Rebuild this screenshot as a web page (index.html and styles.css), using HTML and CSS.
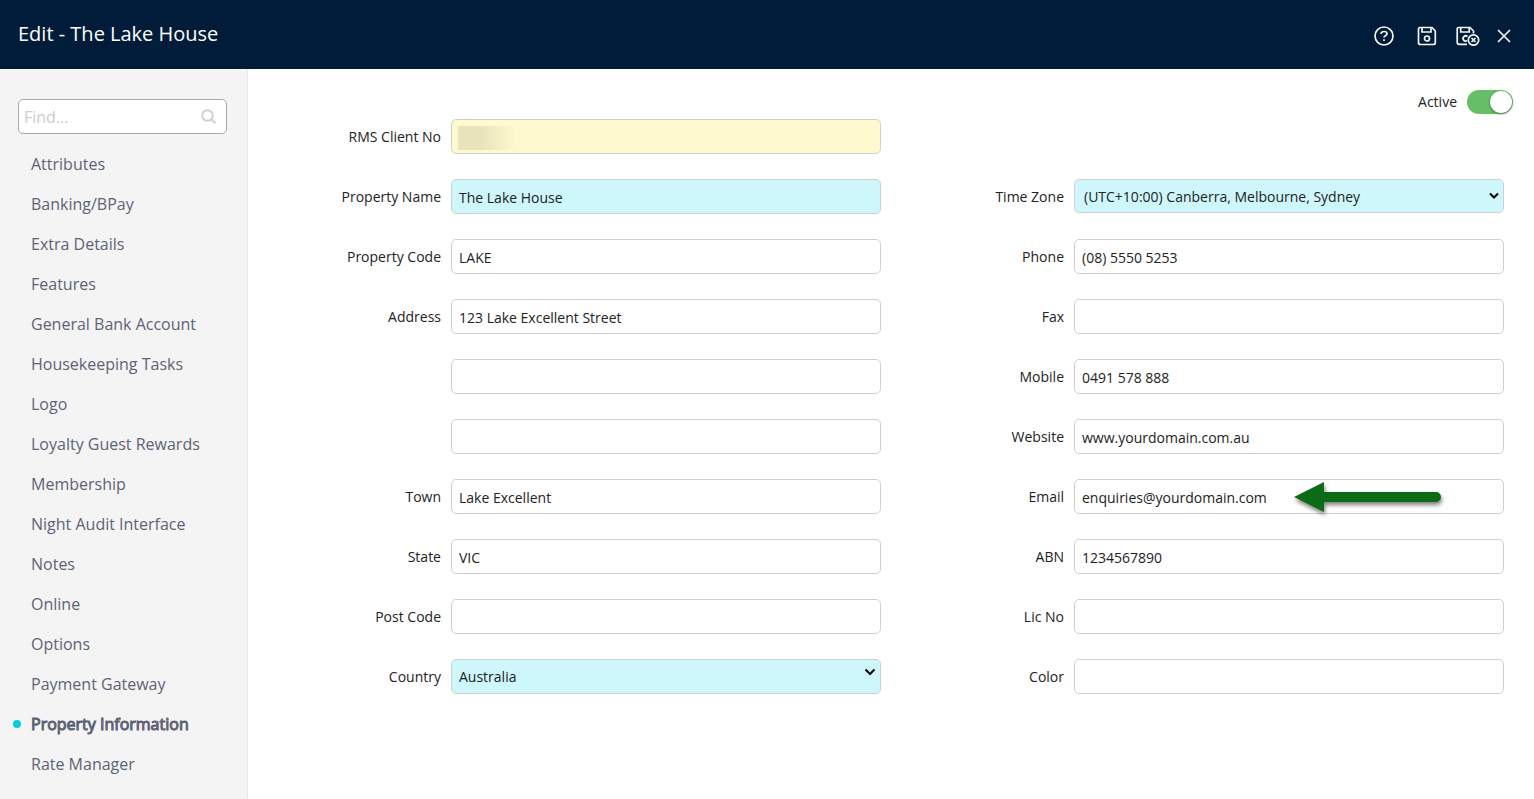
FILE: index.html
```html
<!DOCTYPE html>
<html lang="en">
<head>
    <meta charset="UTF-8">
    <meta name="viewport" content="width=device-width, initial-scale=1.0">
    <title>Edit - The Lake House</title>
    <link rel="stylesheet" href="styles.css">
</head>
<body>

    <header class="header">
        <h1>Edit - The Lake House</h1>
        <div class="header-buttons">
            <button type="button" class="help-btn" aria-label="Help">
                <svg width="20" height="20" viewBox="0 0 20 20">
                    <circle cx="10" cy="10" r="9"/>
                    <path d="M7 8C7 6.300 8.300 5.500 10 5.500s3 .9 3 2.300c0 1.900-3 1.900-3 3.700"/>
                    <path d="M10 13.200v1.800"/>
                </svg>
            </button>
            <button type="button" class="save-btn" aria-label="Save">
                <svg width="20" height="20" viewBox="0 0 20 20">
                    <path d="M3 1.500h12L18.300 5v11.500a2 2 0 0 1-2 2H3.500a2 2 0 0 1-2-2V3a1.500 1.500 0 0 1 1.500-1.500z"/>
                    <path d="M5 1.500v4.500h9v-4.500"/>
                    <circle cx="10" cy="12.500" r="2.500"/>
                </svg>
            </button>
            <button type="button" class="exit-btn" aria-label="Save and exit">
                <svg width="24" height="20" viewBox="0 0 24 20">
                    <path d="M11 18.300H3.200a2 2 0 0 1-2-2V3a1.500 1.500 0 0 1 1.500-1.500h11.300L17.500 5v2.500"/>
                    <path d="M4.700 1.500v4.500h8.500v-4.500"/>
                    <path d="M11.500 10.600a2.600 2.600 0 1 0-.3 4"/>
                    <circle cx="17.500" cy="14" r="5.200"/>
                    <path d="M15.500 12l4 4M19.500 12l-4 4"/>
                </svg>
            </button>
            <button type="button" class="close-btn" aria-label="Close">
                <svg width="14" height="14" viewBox="0 0 14 14">
                    <path d="M1 1l12 12M13 1L1 13"/>
                </svg>
            </button>
        </div>
    </header>

    <div class="page">
        <nav class="sidebar">
            <div class="search">
                <input type="text" placeholder="Find..." aria-label="Find">
                <svg width="16" height="16" viewBox="0 0 16 16">
                    <circle cx="6.500" cy="6.500" r="5.300"/>
                    <path d="M10.500 10.500l4 4"/>
                </svg>
            </div>
            <ul class="menu">
                <li><a href="#">Attributes</a></li>
                <li><a href="#">Banking/BPay</a></li>
                <li><a href="#">Extra Details</a></li>
                <li><a href="#">Features</a></li>
                <li><a href="#">General Bank Account</a></li>
                <li><a href="#">Housekeeping Tasks</a></li>
                <li><a href="#">Logo</a></li>
                <li><a href="#">Loyalty Guest Rewards</a></li>
                <li><a href="#">Membership</a></li>
                <li><a href="#">Night Audit Interface</a></li>
                <li><a href="#">Notes</a></li>
                <li><a href="#">Online</a></li>
                <li><a href="#">Options</a></li>
                <li><a href="#">Payment Gateway</a></li>
                <li class="active"><a href="#">Property Information</a></li>
                <li><a href="#">Rate Manager</a></li>
            </ul>
        </nav>

        <main class="content">
            <div class="active-row">
                <label for="active">Active</label>
                <input type="checkbox" id="active" class="toggle" checked>
            </div>

            <form class="columns">
                <div class="column">
                    <div class="row">
                        <label for="clientNo">RMS Client No</label>
                        <div class="field">
                            <input type="text" id="clientNo" class="locked" readonly>
                            <span class="redacted"></span>
                        </div>
                    </div>
                    <div class="row">
                        <label for="propertyName">Property Name</label>
                        <div class="field"><input type="text" id="propertyName" class="required" value="The Lake House"></div>
                    </div>
                    <div class="row">
                        <label for="propertyCode">Property Code</label>
                        <div class="field"><input type="text" id="propertyCode" value="LAKE"></div>
                    </div>
                    <div class="row">
                        <label for="address1">Address</label>
                        <div class="field"><input type="text" id="address1" value="123 Lake Excellent Street"></div>
                    </div>
                    <div class="row">
                        <label for="address2"></label>
                        <div class="field"><input type="text" id="address2" aria-label="Address line 2"></div>
                    </div>
                    <div class="row">
                        <label for="address3"></label>
                        <div class="field"><input type="text" id="address3" aria-label="Address line 3"></div>
                    </div>
                    <div class="row">
                        <label for="town">Town</label>
                        <div class="field"><input type="text" id="town" value="Lake Excellent"></div>
                    </div>
                    <div class="row">
                        <label for="state">State</label>
                        <div class="field"><input type="text" id="state" value="VIC"></div>
                    </div>
                    <div class="row">
                        <label for="postCode">Post Code</label>
                        <div class="field"><input type="text" id="postCode"></div>
                    </div>
                    <div class="row">
                        <label for="country">Country</label>
                        <div class="field country">
                            <select id="country" class="required">
                                <option>Australia</option>
                            </select>
                            <svg class="arrow" width="12" height="8" viewBox="0 0 12 8"><path d="M1.500 1.500L6 6l4.500-4.500"/></svg>
                        </div>
                    </div>
                </div>

                <div class="column">
                    <div class="row">
                        <label for="timeZone">Time Zone</label>
                        <div class="field time-zone">
                            <select id="timeZone" class="required">
                                <option>(UTC+10:00) Canberra, Melbourne, Sydney</option>
                            </select>
                            <svg class="arrow" width="10" height="8" viewBox="0 0 10 8"><path d="M1 1.500L5 5.500l4-4"/></svg>
                        </div>
                    </div>
                    <div class="row">
                        <label for="phone">Phone</label>
                        <div class="field"><input type="text" id="phone" value="(08) 5550 5253"></div>
                    </div>
                    <div class="row">
                        <label for="fax">Fax</label>
                        <div class="field"><input type="text" id="fax"></div>
                    </div>
                    <div class="row">
                        <label for="mobile">Mobile</label>
                        <div class="field"><input type="text" id="mobile" value="0491 578 888"></div>
                    </div>
                    <div class="row">
                        <label for="website">Website</label>
                        <div class="field"><input type="text" id="website" value="www.yourdomain.com.au"></div>
                    </div>
                    <div class="row">
                        <label for="email">Email</label>
                        <div class="field">
                            <input type="text" id="email" value="enquiries@yourdomain.com">
                            <svg class="pointer" width="156" height="42" viewBox="0 0 156 42">
                                <path d="M4 18L34 3v10h112a5 5 0 0 1 0 10H34v10z"/>
                            </svg>
                        </div>
                    </div>
                    <div class="row">
                        <label for="abn">ABN</label>
                        <div class="field"><input type="text" id="abn" value="1234567890"></div>
                    </div>
                    <div class="row">
                        <label for="licNo">Lic No</label>
                        <div class="field"><input type="text" id="licNo"></div>
                    </div>
                    <div class="row">
                        <label for="color">Color</label>
                        <div class="field"><input type="text" id="color"></div>
                    </div>
                </div>
            </form>
        </main>
    </div>

</body>
</html>
```
FILE: styles.css
```css
* {
    box-sizing: border-box;
}
body {
    font-family: "Open Sans", sans-serif;
    font-size: 14px;
    line-height: 20px;
    color: #222;
    background-color: #fff;
    margin: 0;
    min-height: 100vh;
    display: flex;
    flex-direction: column;
}
.header {
    display: flex;
    justify-content: space-between;
    align-items: center;
    background-color: #001c38;
    color: #fff;
    height: 69px;
    padding: 0 23px 0 18px;
}
.header h1 {
    font-size: 20px;
    line-height: 28px;
    font-weight: 400;
    margin: 0 0 2px;
}
.header-buttons {
    display: flex;
    align-items: center;
    padding-top: 3px;
}
.header-buttons button {
    display: flex;
    background: none;
    border: none;
    padding: 0;
    cursor: pointer;
}
.header-buttons svg {
    fill: none;
    stroke: #f2f4f6;
    stroke-width: 1.7;
}
.help-btn {
    margin-right: 23px;
}
.save-btn {
    margin-right: 19px;
}
.exit-btn {
    margin-right: 17px;
}
.page {
    display: flex;
    flex: 1;
}
.sidebar {
    flex: 0 0 248px;
    background-color: #f4f4f4;
    border-right: 1px solid #e8e8e8;
    padding: 30px 20px 0 18px;
}
.search {
    position: relative;
}
.search input {
    width: 100%;
    height: 35px;
    font-family: inherit;
    font-size: 16px;
    border: 1px solid #aaa;
    border-radius: 5px;
    padding: 0 30px 0 5px;
}
.search input::placeholder {
    color: #ccc;
}
.search svg {
    position: absolute;
    right: 10px;
    top: 10px;
    fill: none;
    stroke: #d0d0d0;
    stroke-width: 2;
}
.menu {
    list-style-type: none;
    margin: 10px 0 0;
    padding: 0;
}
.menu li {
    position: relative;
    padding-left: 13px;
}
.menu a {
    display: block;
    color: #606375;
    font-size: 16px;
    line-height: 40px;
    text-decoration: none;
}
.menu .active a {
    -webkit-text-stroke: 1px #606375;
}
.menu .active::before {
    content: "";
    position: absolute;
    left: -5px;
    top: 16px;
    width: 8px;
    height: 8px;
    border-radius: 50%;
    background-color: #00cfdd;
}
.content {
    flex: 1;
    padding: 21px 30px 20px 10px;
}
.active-row {
    display: flex;
    justify-content: flex-end;
    align-items: center;
    gap: 10px;
    margin: 0 -9px 5px 0;
}
.toggle {
    appearance: none;
    width: 46px;
    height: 24px;
    margin: 0;
    border-radius: 12px;
    background-color: #ccc;
}
.toggle::before {
    content: "";
    display: block;
    width: 22px;
    height: 22px;
    margin: 1px;
    border-radius: 50%;
    background-color: #fff;
    box-shadow: 0 1px 3px rgba(0,0,0,0.4);
}
.toggle:checked {
    background-color: #66bf66;
}
.toggle:checked::before {
    margin-left: 23px;
}
.columns {
    display: flex;
    align-items: flex-end;
}
.column {
    flex: 1;
    display: flex;
    flex-direction: column;
    gap: 25px;
}
.row {
    display: flex;
    gap: 10px;
    height: 35px;
}
.row label {
    width: 183px;
    line-height: 35px;
    text-align: right;
}
.field {
    flex: 1;
    position: relative;
}
.field input, .field select {
    display: block;
    width: 100%;
    height: 35px;
    font-family: inherit;
    font-size: 14px;
    color: #222;
    background-color: #fff;
    border: 1px solid #d0d0d0;
    border-radius: 5px;
    padding: 2px 7px 0;
}
.field select {
    appearance: none;
    padding-top: 0;
}
.field .required {
    background-color: #cef7fb;
}
.field .locked {
    background-color: #fff9cf;
}
.redacted {
    position: absolute;
    left: 7px;
    top: 7px;
    width: 58px;
    height: 24px;
    background: linear-gradient(to right, #e8e3ba 40%, #fff9cf);
}
.time-zone select {
    height: 34px;
    padding-left: 9px;
}
.arrow {
    position: absolute;
    right: 5px;
    top: 9px;
    fill: none;
    stroke: #000;
    stroke-width: 2;
    pointer-events: none;
}
.time-zone .arrow {
    top: 13px;
}
.pointer {
    position: absolute;
    left: 216px;
    top: 0;
    fill: #0b6b17;
    filter: drop-shadow(1px 3px 2px rgba(0,0,0,0.5));
    pointer-events: none;
}
```
